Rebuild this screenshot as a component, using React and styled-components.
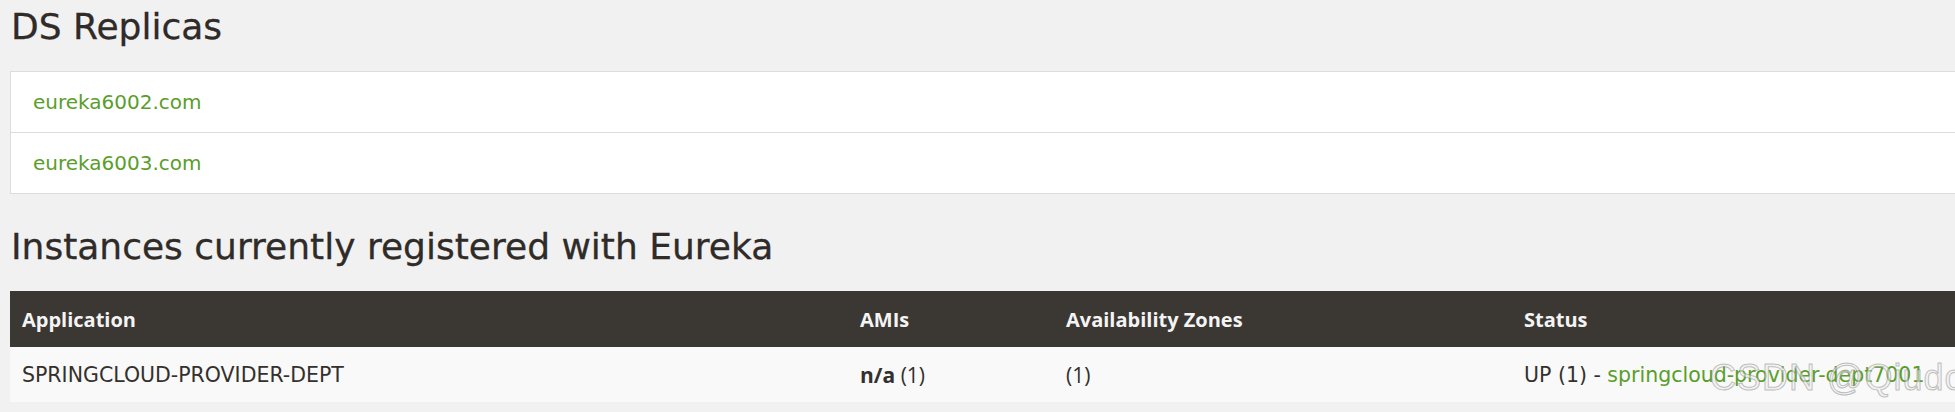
import React from 'react';
import styled, { createGlobalStyle } from 'styled-components';

const GlobalStyle = createGlobalStyle`
  html, body {
    margin: 0;
    padding: 0;
    background: #f1f1f1;
    overflow: hidden;
  }
  body {
    font-family: "DejaVu Sans", "Open Sans", sans-serif;
    color: #34302d;
  }
`;

const Page = styled.main`
  position: relative;
  width: 2000px;
  padding: 7px 0 0 10px;
`;

const Heading = styled.h1`
  margin: 0;
  font-family: "DejaVu Sans", sans-serif;
  font-weight: 400;
  font-size: 36px;
  line-height: 40px;
  color: #2f2b28;
  padding-left: 1px;
  -webkit-text-stroke: 0.3px #2f2b28;
`;

const ReplicaList = styled.ul`
  list-style: none;
  margin: 24px 0 33px;
  padding: 0;
  background: #fff;
  border: 1px solid #dcdcdc;
  border-right: none;
`;

const ReplicaItem = styled.li`
  height: 60px;
  display: flex;
  align-items: center;
  padding-left: 22px;
  & + & {
    border-top: 1px solid #dcdcdc;
  }
`;

const Link = styled.a`
  color: #5a9e2a;
  text-decoration: none;
  font-family: "DejaVu Sans", sans-serif;
  font-size: ${p => p.$size || 20}px;
`;

const Table = styled.table`
  margin-top: 24px;
  width: 100%;
  border-collapse: collapse;
  table-layout: fixed;
`;

const HeadCell = styled.th`
  background: #3b3733;
  color: #f4f4f4;
  text-align: left;
  font-family: "Open Sans", sans-serif;
  font-weight: 700;
  font-size: 20px;
  height: 56px;
  padding: 0 12px;
  vertical-align: middle;
`;

const Cell = styled.td`
  background: #f9f9f9;
  height: 55px;
  padding: 0 12px;
  font-family: ${p => (p.$plain ? '"Open Sans", sans-serif' : '"DejaVu Sans", sans-serif')};
  font-size: ${p => (p.$plain ? 21 : 20.5)}px;
  color: #34302d;
  vertical-align: middle;
  white-space: nowrap;
`;

const Strong = styled.b`
  font-weight: 700;
`;

const Watermark = styled.div`
  position: absolute;
  left: 1710px;
  top: 357px;
  font-family: "Liberation Sans", sans-serif;
  font-size: 36px;
  color: rgba(235, 235, 235, 0.55);
  -webkit-text-stroke: 1px rgba(120, 120, 120, 0.45);
  letter-spacing: 1px;
  white-space: nowrap;
  pointer-events: none;
`;

const replicas = ['eureka6002.com', 'eureka6003.com'];

const App = () => {
  return (
    <>
      <GlobalStyle />
      <Page>
        <Heading>DS Replicas</Heading>
        <ReplicaList>
          {replicas.map(r => (
            <ReplicaItem key={r}>
              <Link href="#">{r}</Link>
            </ReplicaItem>
          ))}
        </ReplicaList>
        <Heading>Instances currently registered with Eureka</Heading>
        <Table>
          <colgroup>
            <col style={{ width: 838 }} />
            <col style={{ width: 206 }} />
            <col style={{ width: 458 }} />
            <col />
          </colgroup>
          <thead>
            <tr>
              <HeadCell>Application</HeadCell>
              <HeadCell>AMIs</HeadCell>
              <HeadCell>Availability Zones</HeadCell>
              <HeadCell>Status</HeadCell>
            </tr>
          </thead>
          <tbody>
            <tr>
              <Cell>SPRINGCLOUD-PROVIDER-DEPT</Cell>
              <Cell $plain><Strong>n/a</Strong> (1)</Cell>
              <Cell $plain>(1)</Cell>
              <Cell>
                UP (1) - <Link href="#" $size={20.5}>springcloud-provider-dept7001</Link>
              </Cell>
            </tr>
          </tbody>
        </Table>
        <Watermark>CSDN @Qiudo</Watermark>
      </Page>
    </>
  );
};

export default App;
